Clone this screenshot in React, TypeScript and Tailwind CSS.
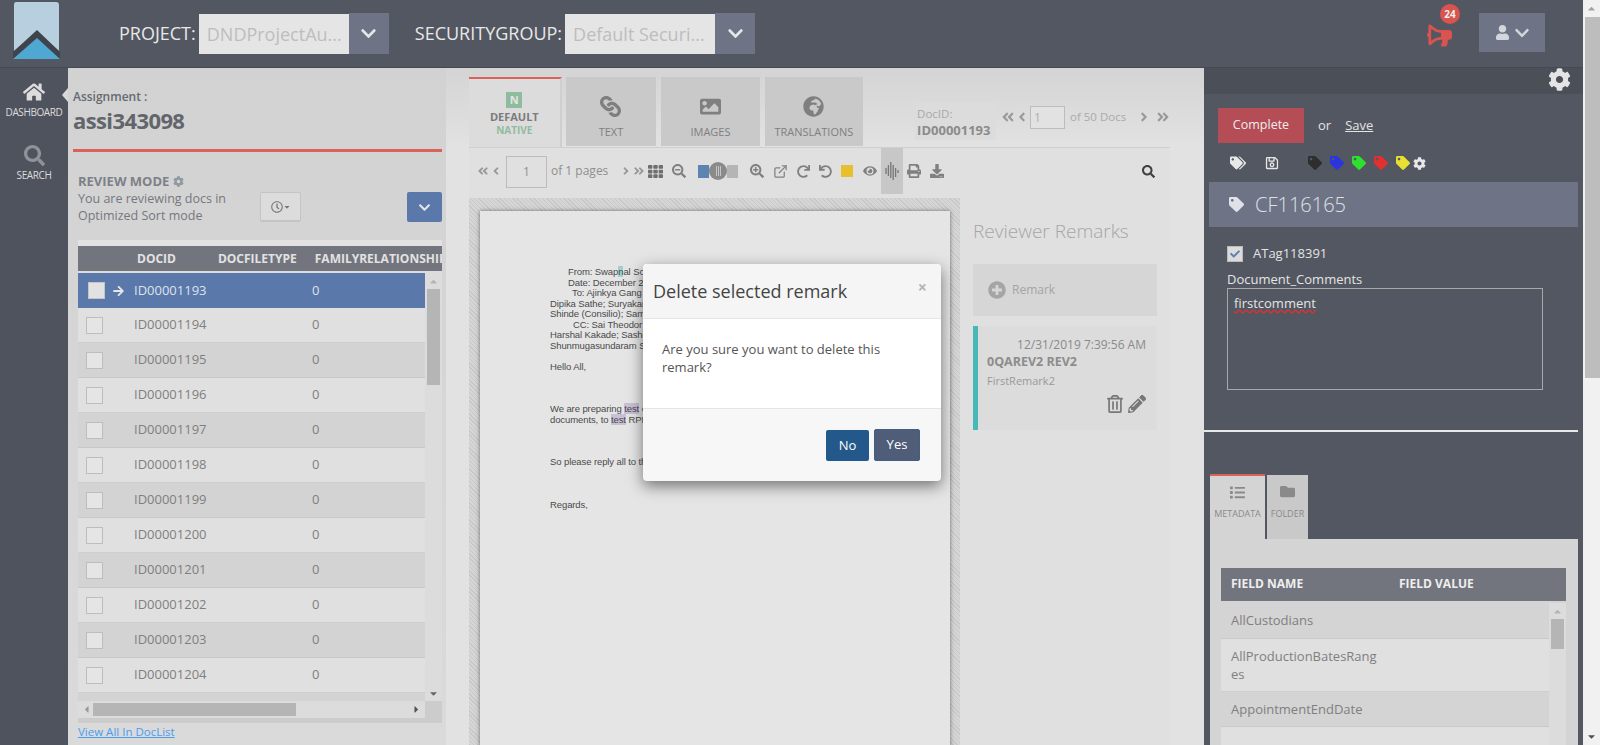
import {
  FaAngleDoubleLeft,
  FaAngleDoubleRight,
  FaAngleLeft,
  FaAngleRight,
  FaArrowRight,
  FaBullhorn,
  FaCheck,
  FaChevronDown,
  FaCog,
  FaDownload,
  FaEye,
  FaFolder,
  FaGlobeAfrica,
  FaHome,
  FaImage,
  FaLink,
  FaList,
  FaPencilAlt,
  FaPlusCircle,
  FaPrint,
  FaRedo,
  FaRegClock,
  FaRegSave,
  FaRegTrashAlt,
  FaSearch,
  FaSearchMinus,
  FaSearchPlus,
  FaTag,
  FaTags,
  FaTh,
  FaUndo,
  FaUser,
  FaCaretDown,
  FaCaretUp,
  FaCaretLeft,
  FaCaretRight,
} from "react-icons/fa";
import { FiExternalLink } from "react-icons/fi";

const docIds = [
  "ID00001193",
  "ID00001194",
  "ID00001195",
  "ID00001196",
  "ID00001197",
  "ID00001198",
  "ID00001199",
  "ID00001200",
  "ID00001201",
  "ID00001202",
  "ID00001203",
  "ID00001204",
  "",
];

function Logo() {
  return (
    <svg width="48" height="58" viewBox="0 0 48 58">
      <path d="M3 0H43Q46 0 46 3V49L24 30L1 49V3Q1 0 3 0Z" fill="#b8cfe0" />
      <path d="M24 28L47 50V57H0V50Z" fill="#3f434c" />
      <path d="M24 36L47 57H0Z" fill="#4fa8d2" />
    </svg>
  );
}

function SelectBox({ value }: { value: string }) {
  return (
    <div className="flex items-center">
      <div className="w-[150px] h-10 bg-[#e5e5e5] text-[#bdbdbd] text-[18px] leading-10 pl-2 whitespace-nowrap">
        {value}
      </div>
      <div className="w-10 h-[41px] bg-[#6e7486] flex items-center justify-center text-[#e6e6e6] text-[17px]">
        <FaChevronDown />
      </div>
    </div>
  );
}

function Header() {
  return (
    <header className="h-[68px] bg-[#535761] border-b border-[#454952] flex items-center shrink-0">
      <div className="ml-[13px] mt-[-6px]">
        <Logo />
      </div>
      <div className="ml-[58px] text-[18px] text-[#e8e8e8] mr-[3px]">PROJECT:</div>
      <SelectBox value="DNDProjectAu..." />
      <div className="ml-[26px] text-[18px] text-[#e8e8e8] mr-[3px]">SECURITYGROUP:</div>
      <SelectBox value="Default Securi..." />
      <div className="ml-auto relative mr-[27px] text-[#d9534f] text-[25px] mt-[4px]">
        <FaBullhorn className="-scale-x-100" />
        <span className="absolute -top-[19px] left-[13px] w-5 h-5 rounded-full bg-[#d9534f] text-[#eee] text-[10px] font-bold flex items-center justify-center">
          24
        </span>
      </div>
      <div className="w-[66px] h-[39px] mr-[38px] mt-[-2px] bg-[#6e7486] flex items-center justify-center gap-[4px] text-[#d4d6dc]">
        <FaUser className="text-[15px]" />
        <FaChevronDown className="text-[16px]" />
      </div>
    </header>
  );
}

function Sidebar() {
  return (
    <aside className="w-[68px] shrink-0 bg-[#4f535d] relative flex flex-col items-center text-[#dcdcdc]">
      <div className="absolute right-0 top-[20px] w-0 h-0 border-y-[7px] border-y-transparent border-r-[6px] border-r-[#d8d8d8]" />
      <FaHome className="text-[22px] mt-[13px]" />
      <div className="text-[10px] leading-[12px] mt-[3px] tracking-[-0.4px]">DASHBOARD</div>
      <FaSearch className="text-[#8f9299] text-[21px] mt-[27px]" />
      <div className="text-[10px] leading-[12px] mt-[3px] tracking-[-0.4px]">SEARCH</div>
    </aside>
  );
}

function DocList() {
  return (
    <section className="w-[378px] shrink-0 bg-gradient-to-b from-[#d2d2d2] to-[#dadada] text-[#6f6f6f] overflow-hidden">
      <div className="h-[81px] pl-[5px] pt-[21px]">
        <div className="text-[12px] leading-[16px] font-semibold text-[#666a70]">Assignment :</div>
        <div className="text-[22px] leading-[30px] font-bold text-[#62656b] tracking-[-0.6px]">assi343098</div>
      </div>
      <div className="ml-[5px] w-[369px] h-[3px] bg-[#d9635b]" />
      <div className="h-[88px] pl-[10px] flex">
        <div className="w-[182px] pt-[21px] text-[12.5px] leading-[17px] text-[#75787e]">
          <div className="flex items-center gap-[4px] font-bold text-[13px] text-[#7d8087]">
            REVIEW MODE <FaCog className="text-[11px] text-[#8f9ba0]" />
          </div>
          <div>You are reviewing docs in</div>
          <div>Optimized Sort mode</div>
        </div>
        <div className="mt-[40px] w-[41px] h-[30px] border border-[#c4c4c4] border-b-2 bg-[#dcdcdc] rounded-[2px] flex items-center justify-center text-[#777] text-[12px]">
          <FaRegClock />
          <FaCaretDown className="text-[8px]" />
        </div>
        <div className="mt-[40px] ml-[106px] w-[35px] h-[30px] bg-[#5b78ab] rounded-[2px] flex items-center justify-center text-[#e6e6e6] text-[13px]">
          <FaChevronDown />
        </div>
      </div>
      <div className="ml-[10px] w-[364px]">
        <div className="h-[6px] bg-[#e2e2e2]" />
        <div className="h-[25px] bg-[#72757e] flex items-center text-[12px] font-bold text-[#e2e2e2] whitespace-nowrap overflow-hidden">
          <span className="ml-[59px]">DOCID</span>
          <span className="ml-[42px]">DOCFILETYPE</span>
          <span className="ml-[18px]">FAMILYRELATIONSHIP</span>
        </div>
        <div className="h-[2px] bg-[#dcdcdc]" />
        <div className="flex h-[428px]">
          <div className="w-[347px] overflow-hidden">
            {docIds.map((id, i) => (
              <div
                key={i}
                className={
                  i === 0
                    ? "h-[35px] bg-[#5b78ab] text-[#dde2ec] flex items-center text-[13px]"
                    : i % 2 === 0
                      ? "h-[35px] bg-[#d3d3d3] border-b border-[#c8c8c8] flex items-center text-[13px] text-[#7f7f7f]"
                      : "h-[35px] bg-[#e0e0e0] border-b border-[#cecece] flex items-center text-[13px] text-[#7f7f7f]"
                }
              >
                <div
                  className={
                    i === 0
                      ? "ml-[10px] w-[17px] h-[17px] bg-[#e2e2e2] border border-[#c5c5c5]"
                      : "ml-[8px] w-[17px] h-[17px] bg-[#e5e5e5] border border-[#bdbdbd]"
                  }
                />
                {i === 0 ? (
                  <FaArrowRight className="ml-[7px] text-[12px] text-[#e6e6e6] w-[13px]" />
                ) : (
                  <div className="w-[22px]" />
                )}
                <span className="ml-[9px] w-[178px]">{id}</span>
                <span>{id && "0"}</span>
              </div>
            ))}
          </div>
          <div className="w-[17px] bg-[#dcdcdc] flex flex-col items-center text-[#b5b5b5] text-[11px]">
            <FaCaretUp className="mt-[3px]" />
            <div className="w-[13px] h-[96px] bg-[#b5b5b5] mt-[2px]" />
            <FaCaretDown className="mt-auto mb-[2px] text-[#666]" />
          </div>
        </div>
        <div className="flex h-[22px] bg-[#cccccc]">
          <div className="w-[347px] h-[17px] bg-[#dcdcdc] flex items-center text-[11px]">
            <FaCaretLeft className="ml-[3px] text-[#999]" />
            <div className="ml-[1px] w-[203px] h-[13px] bg-[#b5b5b5]" />
            <FaCaretRight className="ml-auto mr-[3px] text-[#555]" />
          </div>
        </div>
        <a className="block mt-[1px] text-[11.5px] leading-[16px] text-[#4a9cf0] underline">View All In DocList</a>
      </div>
    </section>
  );
}

function TabButton({ icon, label, w }: { icon: React.ReactNode; label: string; w: string }) {
  return (
    <div className={`${w} h-[69px] bg-[#c9c9c9] flex flex-col items-center text-[#7f7f7f]`}>
      <div className="h-[33px] mt-[13px] text-[21px] flex items-center">{icon}</div>
      <div className="text-[11px] leading-[16px] mt-[1px]">{label}</div>
    </div>
  );
}

function DocTabs() {
  return (
    <div className="h-[70px] flex items-start shrink-0">
      <div className="w-[95px] h-[70px] bg-[#dcdcdc] border-t-2 border-[#d9635b] border-r-2 border-r-[#cfcfcf] flex flex-col items-center mr-[4px]">
        <div className="mt-[13px] w-[16px] h-[16px] bg-[#8fbc9f] text-[#e4e4e4] text-[11px] leading-[16px] font-bold text-center">N</div>
        <div className="text-[11px] leading-[14px] mt-[2px] font-bold text-[#7b7b7b]">DEFAULT</div>
        <div className="text-[10px] leading-[12px] font-bold text-[#90bba0]">NATIVE</div>
      </div>
      <TabButton w="w-[93px] mr-[5px]" label="TEXT" icon={<FaLink className="rotate-90" />} />
      <TabButton w="w-[101px] mr-[5px]" label="IMAGES" icon={<FaImage />} />
      <TabButton w="w-[101px]" label="TRANSLATIONS" icon={<FaGlobeAfrica />} />
      <div className="ml-[52px] mt-[26px] bg-[#dcdcdc] h-[37px] w-[83px] text-[#a8a8a8] text-[11.5px] leading-[15px] pt-[3px] pl-[2px] whitespace-nowrap">
        <div>DocID:</div>
        <div className="font-bold text-[13px] text-[#8b8b8b] leading-[18px]">ID00001193</div>
      </div>
      <div className="mt-[28px] flex items-center h-[24px] text-[#999]">
        <FaAngleDoubleLeft className="ml-[5px] text-[14px]" />
        <FaAngleLeft className="text-[14px] mr-[1px]" />
        <div className="w-[35px] h-[23px] border border-[#bcbcbc] bg-[#e2e2e2] text-[12px] text-[#b0b0b0] pl-[3px] leading-[22px]">1</div>
        <span className="ml-[5px] text-[11.5px] text-[#aaa] w-[62px] whitespace-nowrap">of 50 Docs</span>
        <FaAngleRight className="ml-[5px] text-[14px]" />
        <FaAngleDoubleRight className="ml-[5px] text-[14px]" />
      </div>
    </div>
  );
}

function WaveIcon() {
  return (
    <svg width="14" height="20" viewBox="0 0 14 20" fill="none" stroke="#777" strokeWidth="1.3">
      <path d="M1 7V13M3.4 4V15M5.8 1V17M8.2 4V19M10.6 7V16M13 9V12" />
    </svg>
  );
}

function Toolbar() {
  return (
    <div className="h-[51px] bg-[#e0e0e0] border-t border-[#d0d0d0] flex items-start text-[#808080] shrink-0 relative">
      <div className="flex items-center h-[46px] w-full text-[15px]">
        <FaAngleDoubleLeft className="ml-[8px] text-[12px] text-[#999]" />
        <FaAngleLeft className="ml-[1px] text-[12px] text-[#999]" />
        <div className="ml-[4px] w-[41px] h-[32px] mt-[1px] border border-[#bcbcbc] text-[12px] text-[#909090] text-center leading-[30px]">1</div>
        <span className="ml-[4px] text-[12px] text-[#8f8f8f] w-[58px] whitespace-nowrap">of 1 pages</span>
        <FaAngleRight className="ml-[11px] text-[12px] text-[#999]" />
        <FaAngleDoubleRight className="ml-[1px] text-[12px] text-[#999]" />
        <FaTh className="ml-[3px] text-[#6f6f6f]" />
        <FaSearchMinus className="ml-[9px] text-[14px]" />
        <div className="ml-[12px] flex items-center">
          <div className="w-[11px] h-[13px] bg-[#5b84b1]" />
          <div className="w-[18px] h-[18px] rounded-full bg-[#8a8a8a] flex items-center justify-center gap-[1px]">
            <span className="w-px h-[10px] bg-[#c5c5c5]" />
            <span className="w-px h-[10px] bg-[#c5c5c5]" />
            <span className="w-px h-[10px] bg-[#c5c5c5]" />
          </div>
          <div className="w-[11px] h-[13px] bg-[#b5b5b5]" />
        </div>
        <FaSearchPlus className="ml-[12px] text-[14px]" />
        <FiExternalLink className="ml-[9px] text-[15px]" />
        <FaRedo className="ml-[9px] text-[13px]" />
        <FaUndo className="ml-[9px] text-[13px]" />
        <div className="ml-[9px] w-3 h-3 bg-[#e8bf2e]" />
        <FaEye className="ml-[10px] text-[14px]" />
        <div className="ml-[4px] w-[22px] h-[46px] bg-[#c7c7c7] flex items-center justify-center">
          <WaveIcon />
        </div>
        <FaPrint className="ml-[4px] text-[14px]" />
        <FaDownload className="ml-[9px] text-[14px]" />
        <FaSearch className="ml-auto mr-[15px] text-[13px] text-[#3f3f3f]" />
      </div>
    </div>
  );
}

function DocPage() {
  return (
    <div className="w-[491px] shrink-0 bg-[#cfcfcf] bg-[repeating-linear-gradient(45deg,#c8c8c8_0px,#c8c8c8_1px,#d6d6d6_1px,#d6d6d6_3px)] pl-[11px] pt-[13px] overflow-hidden">
      <div className="w-[470px] h-[600px] bg-[#e5e5e5] shadow-[0_0_4px_rgba(0,0,0,0.5)] text-[#4a4a4a] font-['Liberation_Sans',sans-serif] text-[9.5px] leading-[10.5px] whitespace-nowrap pt-[56px] tracking-[-0.1px]">
        <div className="pl-[88px]">
          From: Swap<span className="bg-[#9fd0d0]">n</span>al Sc
        </div>
        <div className="pl-[88px]">Date: December 2</div>
        <div className="pl-[92px]">To: Ajinkya Gang</div>
        <div className="pl-[70px]">Dipika Sathe; Suryakan</div>
        <div className="pl-[70px]">Shinde (Consilio); Sam</div>
        <div className="pl-[93px]">CC: Sai Theodor</div>
        <div className="pl-[70px]">Harshal Kakade; Sashi</div>
        <div className="pl-[70px]">Shunmugasundaram S</div>
        <div className="pl-[70px] mt-[10.5px]">Hello All,</div>
        <div className="pl-[70px] mt-[32px]">
          We are preparing <span className="bg-[#c9bfd6]">test</span> c
        </div>
        <div className="pl-[70px]">
          documents, to <span className="bg-[#c9bfd6]">test</span> RPM
        </div>
        <div className="pl-[70px] mt-[32px]">So please reply all to th</div>
        <div className="pl-[70px] mt-[32px]">Regards,</div>
      </div>
    </div>
  );
}

function Remarks() {
  return (
    <div className="flex-1 bg-[#e0e0e0] pl-[13px] pr-[13px]">
      <div className="text-[19px] font-light leading-[26px] mt-[20px] text-[#a6a6a6] whitespace-nowrap">Reviewer Remarks</div>
      <div className="mt-[20px] h-[52px] bg-[#d6d6d6] flex items-center pl-[15px] text-[12px] text-[#a5a5a5]">
        <FaPlusCircle className="text-[#a5a5a5] text-[18px] mr-[6px]" />
        Remark
      </div>
      <div className="mt-[10px] h-[104px] bg-[#dcdcdc] border-l-[5px] border-[#46b8b8] pl-[9px] pr-[11px] pt-[11px] text-[#8a8a8a]">
        <div className="text-right text-[12px] leading-[16px] whitespace-nowrap">12/31/2019 7:39:56 AM</div>
        <div className="text-[12.5px] font-bold leading-[18px] text-[#8c8c8c]">0QAREV2 REV2</div>
        <div className="text-[11px] leading-[14px] mt-[3px] text-[#999]">FirstRemark2</div>
        <div className="flex justify-end items-center gap-[4px] mt-[7px] text-[#777] text-[18px]">
          <FaRegTrashAlt />
          <FaPencilAlt />
        </div>
      </div>
    </div>
  );
}

function ReviewPane() {
  return (
    <div className="flex-1 flex flex-col min-w-0 bg-[#e2e2e2]">
      <div className="pl-[23px] pr-[34px] pt-[9px] bg-gradient-to-b from-[#d4d4d4] to-[#e2e2e2] shrink-0">
        <DocTabs />
      </div>
      <div className="ml-[23px] mr-[34px] flex-1 flex flex-col min-h-0">
        <Toolbar />
        <div className="flex-1 flex min-h-0">
          <DocPage />
          <Remarks />
        </div>
      </div>
    </div>
  );
}

function ColorTag({ color }: { color: string }) {
  return <FaTag className="text-[14px]" style={{ color }} />;
}

const metaRows = [
  { name: "AllCustodians", cls: "h-[36px] bg-[#d4d4d4] border-b border-[#c9c9c9]" },
  { name: "AllProductionBatesRanges", cls: "h-[53px] bg-[#e0e0e0] border-b border-[#cfcfcf]" },
  { name: "AppointmentEndDate", cls: "h-[35px] bg-[#d4d4d4] border-b border-[#c9c9c9]" },
  { name: "AppointmentEndDateQ", cls: "h-[53px] bg-[#e0e0e0]" },
];

function CodingPanel() {
  return (
    <aside className="w-[379px] shrink-0 bg-[#535761] text-[#e4e4e4] overflow-hidden flex flex-col">
      <div className="h-[26px] bg-[#4b4f58] flex justify-end items-start pr-[12px] pt-[1px] text-[23px] shrink-0">
        <FaCog className="mt-[-1px]" />
      </div>
      <div className="flex items-center pl-[14px] mt-[14px] text-[13px]">
        <div className="w-[86px] h-[35px] bg-[#b44d55] text-[#eee] text-[12.5px] flex items-center justify-center">Complete</div>
        <span className="ml-[14px]">or</span>
        <span className="ml-[14px] underline">Save</span>
      </div>
      <div className="flex items-center h-[20px] mt-[10px] pl-[26px]">
        <FaTags className="text-[16px] text-[#e8e8e8]" />
        <FaRegSave className="ml-[19px] text-[14px] text-[#e8e8e8]" />
        <div className="ml-[29px] flex items-center gap-[8px]">
          <ColorTag color="#2e2e2e" />
          <ColorTag color="#2a35e0" />
          <ColorTag color="#2fe02f" />
          <ColorTag color="#e03030" />
          <ColorTag color="#e8e030" />
        </div>
        <FaCog className="ml-[3px] text-[13px] text-[#e8e8e8]" />
      </div>
      <div className="ml-[5px] w-[369px] h-[45px] mt-[9px] bg-[#6e7486] flex items-center pl-[20px] text-[20px] font-light text-[#dfe2e8] shrink-0">
        <FaTag className="text-[15px] mr-[11px]" />
        CF116165
      </div>
      <div className="flex items-center pl-[23px] mt-[17px] text-[13px]">
        <div className="w-[16px] h-[16px] bg-[#dcdcdc] border border-[#bbb] flex items-center justify-center text-[#5b84b1] text-[10px]">
          <FaCheck />
        </div>
        <span className="ml-[10px]">ATag118391</span>
      </div>
      <div className="pl-[23px] text-[13px] leading-[18px] mt-[6px]">Document_Comments</div>
      <div className="ml-[23px] w-[316px] h-[102px] border border-[#a8a8a8] px-[6px] pt-[5px] text-[13px] shrink-0">
        <span className="underline decoration-wavy decoration-[#e03030]">firstcomment</span>
      </div>
      <div className="mt-[40px] w-[374px] h-[2px] bg-[#e8e8e8] shrink-0" />
      <div className="flex ml-[6px] mt-[42px] h-[65px] shrink-0 items-end">
        <div className="w-[55px] h-[65px] bg-[#d4d4d4] border-t-2 border-[#d9635b] flex flex-col items-center text-[#8a8a8a]">
          <FaList className="text-[15px] mt-[9px]" />
          <div className="text-[9px] mt-[7px]">METADATA</div>
        </div>
        <div className="ml-[2px] w-[41px] h-[64px] bg-[#c9c9c9] flex flex-col items-center text-[#8a8a8a]">
          <FaFolder className="text-[15px] mt-[9px]" />
          <div className="text-[9px] mt-[8px]">FOLDER</div>
        </div>
      </div>
      <div className="ml-[6px] w-[368px] flex-1 bg-[#d4d4d4] pl-[11px] pr-[12px] pt-[29px] overflow-hidden">
        <div className="h-[33px] bg-[#72757e] flex items-center text-[12px] font-bold text-[#eee]">
          <span className="ml-[10px] w-[168px]">FIELD NAME</span>
          <span>FIELD VALUE</span>
        </div>
        <div className="flex mt-[2px]">
          <div className="w-[328px]">
            {metaRows.map((r) => (
              <div key={r.name} className={`${r.cls} flex items-center`}>
                <div className="ml-[10px] w-[150px] break-all text-[13px] leading-[18px] text-[#7f7f7f]">{r.name}</div>
              </div>
            ))}
          </div>
          <div className="w-[17px] h-[160px] bg-[#dcdcdc] flex flex-col items-center text-[#b5b5b5] text-[11px]">
            <FaCaretUp className="mt-[3px]" />
            <div className="w-[13px] h-[30px] bg-[#b5b5b5] mt-[2px]" />
          </div>
        </div>
      </div>
    </aside>
  );
}

function Modal() {
  return (
    <div className="absolute left-[643px] top-[264px] w-[298px] h-[217px] rounded-[4px] bg-[#f7f7f7] shadow-[0_5px_15px_rgba(0,0,0,0.5)] flex flex-col overflow-hidden">
      <div className="h-[55px] bg-[#f5f5f5] border-b border-[#e5e5e5] flex items-center pl-[10px] pr-[14px] shrink-0">
        <span className="text-[18px] text-[#444]">Delete selected remark</span>
        <span className="ml-auto text-[16px] font-bold text-[#b5b5b5] -mt-[8px]">×</span>
      </div>
      <div className="h-[90px] bg-white border-b border-[#e5e5e5] pl-[19px] pr-[20px] pt-[21px] text-[13px] leading-[18px] text-[#555] shrink-0">
        Are you sure you want to delete this remark?
      </div>
      <div className="flex justify-end items-start gap-[5px] pr-[21px] pt-[20px]">
        <button className="w-[43px] h-[31px] mt-[1px] bg-[#23588a] rounded-[2px] text-white text-[13px]">No</button>
        <button className="w-[46px] h-[32px] bg-[#4f5d78] border border-[#3f5f85] rounded-[2px] text-white text-[13px]">Yes</button>
      </div>
    </div>
  );
}

function PageScrollbar() {
  return (
    <div className="w-[17px] shrink-0 bg-[#f1f1f1] flex flex-col items-center text-[11px] text-[#a3a3a3]">
      <FaCaretUp className="mt-[3px]" />
      <div className="w-[15px] h-[361px] ml-[2px] mt-[3px] bg-[#bdbdbd]" />
      <FaCaretDown className="mt-auto mb-[3px] text-[#505050]" />
    </div>
  );
}

export default function App() {
  return (
    <div className="relative w-[1600px] h-[745px] flex overflow-hidden font-['Open_Sans',sans-serif]">
      <div className="w-[1583px] flex flex-col">
        <Header />
        <div className="flex-1 flex min-h-0">
          <Sidebar />
          <DocList />
          <ReviewPane />
          <CodingPanel />
        </div>
      </div>
      <PageScrollbar />
      <Modal />
    </div>
  );
}
